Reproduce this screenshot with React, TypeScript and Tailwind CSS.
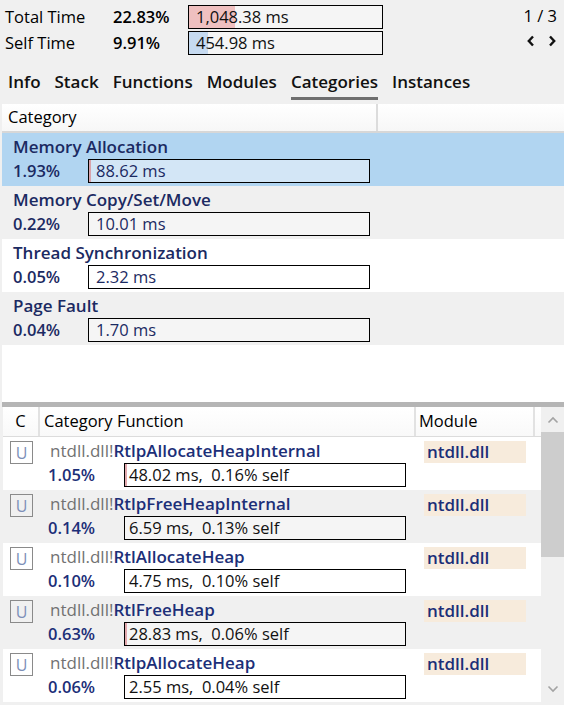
import React from "react";

function Bar({ text, fill, fillColor, bg }: { text: string; fill: number; fillColor: string; bg: string }) {
  return (
    <div className={`relative h-[24px] border border-black ${bg} overflow-hidden`}>
      <div className="absolute left-0 top-0 bottom-0" style={{ width: fill, background: fillColor }} />
      <div className="relative pl-[7px] leading-[22px] text-[16.5px] text-[#111]">{text}</div>
    </div>
  );
}

const categories = [
  { name: "Memory Allocation", pct: "1.93%", ms: "88.62 ms", bg: "bg-[#b1d5f1]", box: "bg-[#d3e6f6]", fill: 2 },
  { name: "Memory Copy/Set/Move", pct: "0.22%", ms: "10.01 ms", bg: "bg-[#f0f0f0]", box: "bg-[#f5f5f5]", fill: 0 },
  { name: "Thread Synchronization", pct: "0.05%", ms: "2.32 ms", bg: "bg-white", box: "bg-white", fill: 0 },
  { name: "Page Fault", pct: "0.04%", ms: "1.70 ms", bg: "bg-[#f0f0f0]", box: "bg-[#f5f5f5]", fill: 0 },
];

const functions = [
  { name: "RtlpAllocateHeapInternal", pct: "1.05%", ms: "48.02 ms,  0.16% self", fill: 2 },
  { name: "RtlpFreeHeapInternal", pct: "0.14%", ms: "6.59 ms,  0.13% self", fill: 0 },
  { name: "RtlAllocateHeap", pct: "0.10%", ms: "4.75 ms,  0.10% self", fill: 0 },
  { name: "RtlFreeHeap", pct: "0.63%", ms: "28.83 ms,  0.06% self", fill: 2 },
  { name: "RtlpAllocateHeap", pct: "0.06%", ms: "2.55 ms,  0.04% self", fill: 0 },
];

export default function App() {
  return (
    <div className="w-[564px] h-[705px] overflow-hidden bg-[#f0f0f0] font-['Open_Sans',sans-serif] text-black flex flex-col">
      {/* Top summary */}
      <div className="flex pt-[5px] h-[57px] shrink-0">
        <div className="flex flex-col gap-[2px]">
          <div className="flex h-[24px] items-center">
            <div className="w-[113px] pl-[5px] text-[16.5px]">Total Time</div>
            <div className="w-[75px] text-[16.5px] font-semibold">22.83%</div>
            <div className="w-[195px]">
              <Bar text="1,048.38 ms" fill={46} fillColor="#efc0c0" bg="bg-[#f5f5f5]" />
            </div>
          </div>
          <div className="flex h-[24px] items-center">
            <div className="w-[113px] pl-[5px] text-[16.5px]">Self Time</div>
            <div className="w-[75px] text-[16.5px] font-semibold">9.91%</div>
            <div className="w-[195px]">
              <Bar text="454.98 ms" fill={19} fillColor="#c6daf0" bg="bg-[#f5f5f5]" />
            </div>
          </div>
        </div>
        <div className="flex-1 flex flex-col items-end pr-[7px]">
          <div className="h-[24px] leading-[22px] text-[16.5px]">1 / 3</div>
          <div className="h-[24px] flex items-center gap-[13px] pr-[1px]">
            <svg width="8" height="12" viewBox="0 0 8 12">
              <polyline points="6,1.5 1.8,6 6,10.5" fill="none" stroke="#111" strokeWidth="2.4" />
            </svg>
            <svg width="8" height="12" viewBox="0 0 8 12">
              <polyline points="2,1.5 6.2,6 2,10.5" fill="none" stroke="#111" strokeWidth="2.4" />
            </svg>
          </div>
        </div>
      </div>

      {/* Tabs */}
      <div className="flex h-[47px] shrink-0 pl-[8px] gap-[14px] items-start pt-[13px]">
        {["Info", "Stack", "Functions", "Modules", "Categories", "Instances"].map((t) => (
          <div key={t} className="flex flex-col">
            <div className="text-[17px] font-semibold leading-[24px] text-[#111]">{t}</div>
            {t === "Categories" ? (
              <div className="h-[3px] mt-[3px] bg-[#6e6e6e]" />
            ) : (
              <div className="h-[3px] mt-[3px]" />
            )}
          </div>
        ))}
      </div>

      {/* Categories panel */}
      <div className="ml-[2px] flex flex-col h-[298px] shrink-0 bg-white">
        <div className="flex h-[29px] bg-gradient-to-b from-white to-[#f7f7f7] border-b-2 border-[#d7d7d7]">
          <div className="w-[376px] pl-[6px] text-[16.5px] leading-[26px] border-r-2 border-[#dcdcdc]">Category</div>
          <div className="flex-1" />
        </div>
        {categories.map((c) => (
          <div key={c.name} className={`h-[53px] ${c.bg} flex flex-col pl-[11px]`}>
            <div className="h-[26px] pt-[3px] leading-[22px] text-[17px] font-semibold text-[#1b2a62]">{c.name}</div>
            <div className="flex h-[24px] items-center">
              <div className="w-[75px] text-[16.5px] font-semibold text-[#1b2a62]">{c.pct}</div>
              <div className="w-[282px]">
                <div className={`relative h-[24px] border border-black ${c.box} overflow-hidden`}>
                  {c.fill > 0 && <div className="absolute left-0 top-0 bottom-0 w-[2px] bg-[#d9a3ab]" />}
                  <div className="relative pl-[7px] leading-[22px] text-[16.5px] text-[#1b2a62]">{c.ms}</div>
                </div>
              </div>
            </div>
          </div>
        ))}
        <div className="flex-1 bg-white" />
      </div>

      {/* Splitter */}
      <div className="ml-[2px] h-[5px] shrink-0 bg-[#b5b5b5]" />

      {/* Functions panel */}
      <div className="flex flex-1 min-h-0 ml-[3px]">
        <div className="flex-1 flex flex-col overflow-hidden">
          <div className="flex h-[30px] shrink-0 bg-gradient-to-b from-white to-[#f9f9f9] border-b border-[#dcdcdc] text-[16.5px] leading-[28px]">
            <div className="w-[37px] text-center border-r-2 border-[#e2e2e2]">C</div>
            <div className="w-[376px] pl-[4px] border-r-2 border-[#e2e2e2]">Category Function</div>
            <div className="w-[119px] pl-[3px] border-r-2 border-[#e2e2e2]">Module</div>
            <div className="flex-1" />
          </div>
          {functions.map((f, i) => (
            <div key={f.name} className={`h-[53px] shrink-0 flex ${i % 2 === 0 ? "bg-white" : "bg-[#f0f0f0]"}`}>
              <div className="w-[43px] pl-[7px] pt-[4px]">
                <div className="w-[23px] h-[23px] border border-[#8a8a8a] flex items-center justify-center text-[16px] text-[#7d8fb8] leading-none">
                  U
                </div>
              </div>
              <div className="w-[378px] flex flex-col">
                <div className="h-[26px] pt-[3px] pl-[4px] leading-[22px] text-[17px] whitespace-nowrap">
                  <span className="text-[#727272]">ntdll.dll!</span>
                  <span className="font-semibold text-[#1c2f78]">{f.name}</span>
                </div>
                <div className="flex h-[24px] items-center">
                  <div className="w-[78px] pl-[2px] text-[16.5px] font-semibold text-[#1c2f78]">{f.pct}</div>
                  <div className="w-[282px]">
                    <div className={`relative h-[24px] border border-black ${i % 2 === 0 ? "bg-white" : "bg-[#f5f5f5]"} overflow-hidden`}>
                      {f.fill > 0 && <div className="absolute left-0 top-0 bottom-0 w-[2px] bg-[#e2a9ae]" />}
                      <div className="relative pl-[4px] leading-[22px] text-[16.5px] text-[#111] whitespace-pre">{f.ms}</div>
                    </div>
                  </div>
                </div>
              </div>
              <div className="pt-[4px]">
                <div className="w-[102px] h-[22px] pl-[3px] leading-[22px] text-[17px] font-semibold text-[#1c2f78] bg-[#f7ebdc]">
                  ntdll.dll
                </div>
              </div>
            </div>
          ))}
          {/* next row, just peeking in at the bottom edge */}
          <div className="h-[53px] shrink-0 flex bg-[#f0f0f0]">
            <div className="w-[43px] pl-[7px] pt-[4px]">
              <div className="w-[23px] h-[23px] border border-[#8a8a8a]" />
            </div>
            <div className="w-[378px]" />
            <div className="pt-[4px]">
              <div className="w-[102px] h-[22px] bg-[#e6f4e1]" />
            </div>
          </div>
        </div>
        {/* Scrollbar */}
        <div className="w-[23px] flex flex-col bg-[#f0f0f0]">
          <div className="h-[25px] flex items-center justify-center">
            <svg width="12" height="8" viewBox="0 0 12 8">
              <polyline points="1.5,6.5 6,2 10.5,6.5" fill="none" stroke="#a3a3a3" strokeWidth="1.6" />
            </svg>
          </div>
          <div className="h-[125px] bg-[#cdcdcd]" />
          <div className="flex-1" />
          <div className="h-[24px] flex items-start justify-center pt-[4px]">
            <svg width="12" height="8" viewBox="0 0 12 8">
              <polyline points="1.5,1.5 6,6 10.5,1.5" fill="none" stroke="#a3a3a3" strokeWidth="1.6" />
            </svg>
          </div>
        </div>
      </div>
    </div>
  );
}
